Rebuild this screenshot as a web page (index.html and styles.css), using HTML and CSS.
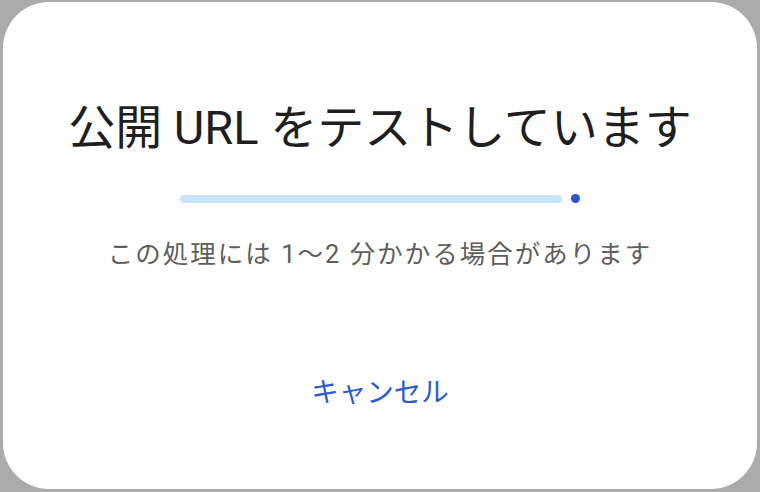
FILE: index.html
```html
<!DOCTYPE html>
<html lang="ja">
<head>
<meta charset="utf-8">
<link rel="stylesheet" href="styles.css">
</head>
<body>
<div class="backdrop">
  <div class="dialog">
    <h1 class="title">公開 URL をテストしています</h1>
    <div class="progress">
      <div class="track"></div>
      <div class="dot"></div>
    </div>
    <p class="note">この処理には 1〜2 分かかる場合があります</p>
    <button class="cancel">キャンセル</button>
  </div>
</div>
</body>
</html>
```

FILE: styles.css
```css
html, body {
  margin: 0;
  padding: 0;
}
body {
  width: 760px;
  height: 492px;
  overflow: hidden;
  background: #ababab;
  font-family: Roboto, "Noto Sans CJK JP", sans-serif;
}
.backdrop {
  padding: 2px 3px 3px 3px;
  height: 492px;
  box-sizing: border-box;
}
.dialog {
  height: 100%;
  background: #ffffff;
  border-radius: 46px;
  display: flex;
  flex-direction: column;
  align-items: center;
  box-sizing: border-box;
  padding-top: 98px;
}
.title {
  margin: 0;
  font-size: 47px;
  font-weight: 400;
  line-height: 56px;
  color: #1f1f1f;
}
.progress {
  display: flex;
  align-items: center;
  gap: 9px;
  margin-top: 38px;
}
.track {
  width: 382px;
  height: 8px;
  border-radius: 4px;
  background: #c8e3fb;
}
.dot {
  width: 9px;
  height: 9px;
  border-radius: 50%;
  background: #2a55c9;
}
.note {
  margin: 35px 0 0 0;
  font-size: 25.5px;
  line-height: 32px;
  color: #5e5e5e;
  letter-spacing: 2px;
}
.cancel {
  margin-top: 106px;
  border: none;
  background: none;
  padding: 0;
  font-family: inherit;
  font-size: 27.5px;
  line-height: 34px;
  color: #2a5ccc;
}
```
